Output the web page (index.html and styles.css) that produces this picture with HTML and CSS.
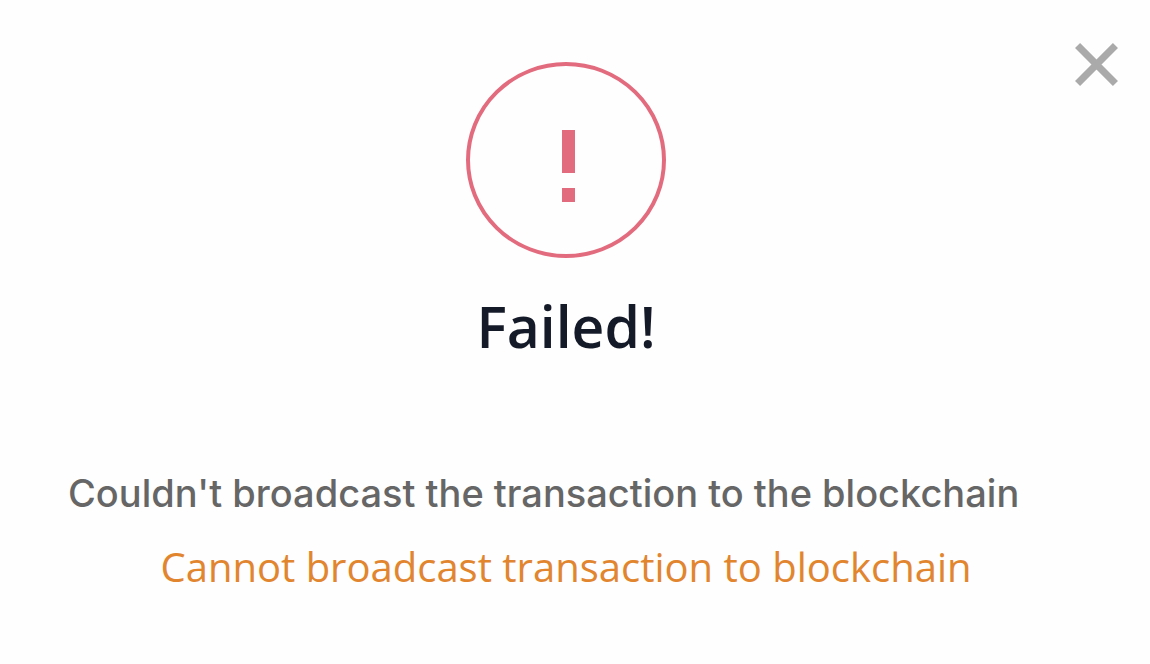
FILE: index.html
```html
<!DOCTYPE html>
<html lang="en">
<head>
<meta charset="utf-8">
<meta name="viewport" content="width=device-width, initial-scale=1">
<title>Failed!</title>
<link rel="stylesheet" href="styles.css">
</head>
<body>
<main class="dialog" role="alertdialog" aria-labelledby="title" aria-describedby="message">
  <button class="close" type="button" aria-label="Close">
    <svg class="close-icon" viewBox="0 0 42 42" aria-hidden="true"><path d="M2.5 2.5L39.5 39.5M39.5 2.5L2.5 39.5"/></svg>
  </button>
  <svg class="status-icon" viewBox="0 0 200 196" aria-hidden="true">
    <ellipse class="ring" cx="100" cy="98" rx="98" ry="96"/>
    <path class="mark" d="M96 68h13v43h-13zM96 126h13v14h-13z"/>
  </svg>
  <h1 class="title" id="title">Failed!</h1>
  <p class="message" id="message">Couldn't broadcast the transaction to the blockchain</p>
  <p class="detail">Cannot broadcast transaction to blockchain</p>
</main>
</body>
</html>
```
FILE: styles.css
```css
body {
  margin: 0;
  background: #fefefe;
  font-family: "Open Sans", sans-serif;
}

.dialog {
  position: relative;
  box-sizing: border-box;
  min-height: 100vh;
  padding: 62px 64px 48px 46px;
  display: flex;
  flex-direction: column;
  align-items: center;
}

.close {
  position: absolute;
  top: 43px;
  right: 32px;
  padding: 0;
  border: 0;
  background: none;
  cursor: pointer;
}

.close-icon {
  display: block;
  width: 43px;
  height: 43px;
  fill: none;
  stroke: #aaa;
  stroke-width: 7;
}

.status-icon {
  width: 200px;
  height: 196px;
}

.ring {
  fill: none;
  stroke: #e36b7e;
  stroke-width: 4;
}

.mark {
  fill: #e36b7e;
}

.title {
  margin: 28px 0 0;
  font-size: 57px;
  line-height: 80px;
  font-weight: 600;
  color: #151a28;
}

.message {
  align-self: flex-start;
  margin: 99px 0 0 22px;
  font-family: Inter, sans-serif;
  font-size: 38px;
  line-height: 56px;
  font-weight: 500;
  color: #666;
}

.detail {
  margin: 18px 0 0;
  font-size: 40px;
  line-height: 56px;
  color: #e2852f;
}
```
